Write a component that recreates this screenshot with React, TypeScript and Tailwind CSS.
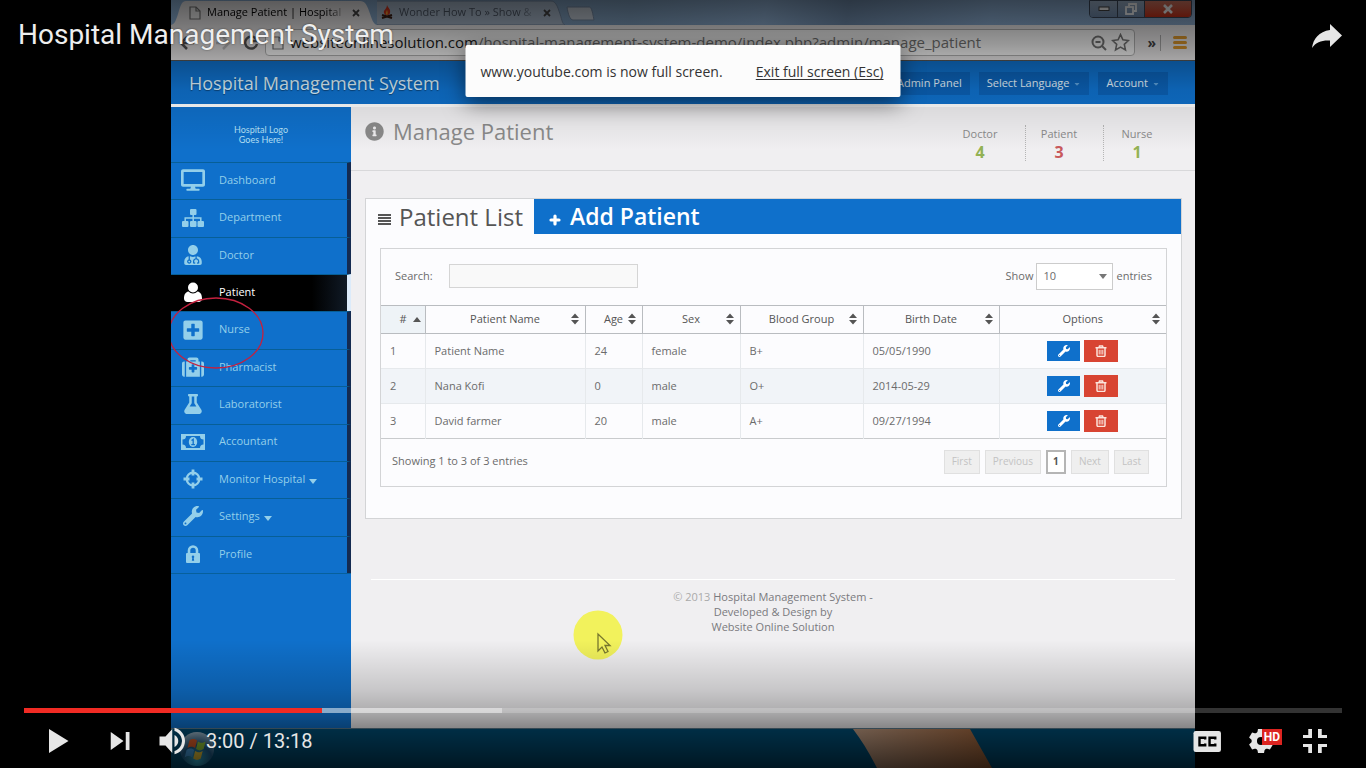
import type { ReactNode } from "react";
import {
  FaCaretDown,
  FaDesktop,
  FaFlask,
  FaInfoCircle,
  FaMedkit,
  FaPlusSquare,
  FaUserMd,
  FaWrench,
} from "react-icons/fa";

type IconProps = { className?: string };

function SitemapIcon({ className }: IconProps) {
  return (
    <svg viewBox="0 0 22 20" className={className} fill="currentColor">
      <rect x="8" y="1" width="6.500" height="6" rx="1" />
      <rect x="0" y="13" width="6.500" height="6" rx="1" />
      <rect x="8" y="13" width="6.500" height="6" rx="1" />
      <rect x="15.500" y="13" width="6.500" height="6" rx="1" />
      <path d="M3.200 13v-3h15.600v3M11.200 7v6" fill="none" stroke="currentColor" strokeWidth="1.500" />
    </svg>
  );
}

function UserIcon({ className }: IconProps) {
  return (
    <svg viewBox="0 0 20 22" className={className} fill="currentColor">
      <circle cx="10" cy="6.500" r="5" />
      <path d="M5.500 10.500c2.500 2.500 6.500 2.500 9 0 3.500.500 4.500 4 4.500 7 0 2-1.500 3.500-3.500 3.500h-11C2.500 21 1 19.500 1 17.500c0-3 1-6.500 4.500-7z" />
    </svg>
  );
}

function MoneyIcon({ className }: IconProps) {
  return (
    <svg viewBox="0 0 24 24" className={className}>
      <path
        fill="currentColor"
        fillRule="evenodd"
        d="M0 4h24v16H0zM5 6a3.500 3.500 0 0 1-3.500 3.500v5A3.500 3.500 0 0 1 5 18h14a3.500 3.500 0 0 1 3.500-3.500v-5A3.500 3.500 0 0 1 19 6z"
      />
      <ellipse cx="12" cy="12" rx="4.200" ry="5" fill="currentColor" />
      <path d="M10.500 10.500l1.700-1.200v5.200M10.300 14.700h3.600" fill="none" stroke="#0f70cb" strokeWidth="1.300" />
    </svg>
  );
}

function CrosshairsIcon({ className }: IconProps) {
  return (
    <svg viewBox="0 0 20 20" className={className} fill="none" stroke="currentColor">
      <circle cx="10" cy="10" r="6.300" strokeWidth="2.200" />
      <path d="M10 .500v6M10 13.500v6M.500 10h6M13.500 10h6" strokeWidth="2.800" />
    </svg>
  );
}

function LockIcon({ className }: IconProps) {
  return (
    <svg viewBox="0 0 18 20" className={className}>
      <path d="M5 10V6.500a4 4 0 0 1 8 0V10" fill="none" stroke="currentColor" strokeWidth="2.600" />
      <rect x="2" y="9" width="14" height="10" rx="1" fill="currentColor" />
      <path d="M9 11.500a1.300 1.300 0 0 1 .700 2.400l.500 2.800H7.800l.500-2.800a1.300 1.300 0 0 1 .7-2.400z" fill="#0f70cb" />
    </svg>
  );
}

function TrashIcon({ className }: IconProps) {
  return (
    <svg viewBox="0 0 12 12" className={className} fill="none" stroke="currentColor">
      <path d="M.5 2.800h11M4 2.500l.500-1.500h3L8 2.500" strokeWidth="1.500" />
      <path d="M2 3v7.300c0 .7.400 1.100 1 1.100h6c.6 0 1-.4 1-1.100V3" strokeWidth="1.500" />
      <path d="M4.200 4.800v4.700M6 4.800v4.700M7.800 4.800v4.700" />
    </svg>
  );
}

function SortIcon({ className }: IconProps) {
  return (
    <svg viewBox="0 0 8 12" className={className} fill="currentColor">
      <path d="M4 .5L8 5H0zM4 11.500L0 7h8z" />
    </svg>
  );
}

const navItems = [
  { label: "Dashboard", icon: FaDesktop, size: "size-6" },
  { label: "Department", icon: SitemapIcon, size: "h-5 w-[22px]" },
  { label: "Doctor", icon: FaUserMd, size: "size-5" },
  { label: "Patient", icon: UserIcon, size: "h-[22px] w-5", active: true },
  { label: "Nurse", icon: FaPlusSquare, size: "size-[22px]" },
  { label: "Pharmacist", icon: FaMedkit, size: "size-[22px]" },
  { label: "Laboratorist", icon: FaFlask, size: "size-5" },
  { label: "Accountant", icon: MoneyIcon, size: "size-6" },
  { label: "Monitor Hospital", icon: CrosshairsIcon, size: "size-5", menu: true },
  { label: "Settings", icon: FaWrench, size: "size-5", menu: true },
  { label: "Profile", icon: LockIcon, size: "h-5 w-[18px]" },
];

const stats = [
  { label: "Doctor", value: 4, color: "text-[#93b255]" },
  { label: "Patient", value: 3, color: "text-[#c8595c]" },
  { label: "Nurse", value: 1, color: "text-[#93b255]" },
];

const columns = [
  { label: "Patient Name", width: "w-[160px]" },
  { label: "Age", width: "w-[57px]" },
  { label: "Sex", width: "w-[98px]" },
  { label: "Blood Group", width: "w-[123px]" },
  { label: "Birth Date", width: "w-[136px]" },
  { label: "Options", width: "" },
];

const patients = [
  { id: 1, name: "Patient Name", age: 24, sex: "female", blood: "B+", birth: "05/05/1990" },
  { id: 2, name: "Nana Kofi", age: 0, sex: "male", blood: "O+", birth: "2014-05-29" },
  { id: 3, name: "David farmer", age: 20, sex: "male", blood: "A+", birth: "09/27/1994" },
];

function PageIcon({ className }: IconProps) {
  return (
    <svg viewBox="0 0 12 14" className={className} fill="#f4f4f4" stroke="#777" strokeWidth="1.2">
      <path d="M1 1h6l4 4v8H1z" />
      <path d="M7 1v4h4" fill="none" />
    </svg>
  );
}

function BrowserChrome() {
  return (
    <header className="shrink-0 font-['Open_Sans',sans-serif]">
      <div className="relative flex h-[25px] items-end bg-[linear-gradient(100deg,#8fb4da_0%,#7f9fbf_45%,#8fb0d4_58%,#728fb0_66%,#8db0d6_80%,#8aa9cc_100%)]">
        <div className="relative flex h-[25px] w-[206px] items-center">
          <svg className="absolute inset-0 size-full" viewBox="0 0 206 25" preserveAspectRatio="none">
            <path d="M0 25 C4 24 5 20 7 14 C10 4 11 1 15 1 H189 C194 1 196 5 198 11 C201 19 202 24 206 25z" fill="#efedee" />
          </svg>
          <PageIcon className="relative ml-[18px] h-[14px] w-3" />
          <span className="relative ml-1.5 w-[141px] text-[11px] whitespace-nowrap text-black mask-r-from-85%">
            Manage Patient | Hospital
          </span>
          <button aria-label="Close tab" className="relative ml-1 text-[#444]">
            <svg viewBox="0 0 8 8" className="size-2" stroke="currentColor" strokeWidth="1.8">
              <path d="M1 1l6 6M7 1L1 7" />
            </svg>
          </button>
        </div>
        <div className="relative flex h-[25px] w-[188px] items-center">
          <svg className="absolute inset-0 size-full" viewBox="0 0 188 25" preserveAspectRatio="none">
            <path d="M-6 1 H174 C178 1 180 5 182 11 C185 19 185 24 188 25 H0 C-4 18 -4 8 -6 1z" fill="#a9b9cc" stroke="#7489a3" />
          </svg>
          <svg viewBox="0 0 12 15" className="relative ml-1 h-[15px] w-3">
            <path d="M6 0c1 3 4 4 3 8-1 3-5 3-6 0-1-3 3-4 3-8z" fill="#d6371e" />
            <path d="M6 5c1 2 1 4 0 5-2-1-1-3 0-5z" fill="#f4a12c" />
            <path d="M1 10l10 3M11 10L1 13" stroke="#3a1c12" strokeWidth="2" />
          </svg>
          <span className="relative ml-1.5 w-[140px] text-[11px] whitespace-nowrap text-[#4c5665] mask-r-from-85%">
            Wonder How To » Show &amp;
          </span>
          <button aria-label="Close tab" className="relative ml-1 text-[#444]">
            <svg viewBox="0 0 8 8" className="size-2" stroke="currentColor" strokeWidth="1.8">
              <path d="M1 1l6 6M7 1L1 7" />
            </svg>
          </button>
        </div>
        <button aria-label="New tab" className="mb-1 h-[15px]">
          <svg viewBox="0 0 30 15" className="h-[15px] w-[30px]">
            <path d="M2 1h22c2 0 3 2 5 13H8C5 14 3 8 2 1z" fill="#c3ccd6" stroke="#7489a3" />
          </svg>
        </button>
        <div className="mr-[3px] mb-[7px] ml-auto flex h-[18px] overflow-hidden rounded-b border border-[#3d4a5c] text-white">
          <button aria-label="Minimize" className="flex w-7 items-center justify-center border-r border-[#3d4a5c] bg-[linear-gradient(#a8bdd6,#6d88aa)]">
            <svg viewBox="0 0 12 6" className="h-1.5 w-3"><rect x="1" y="1" width="10" height="3.5" fill="#fff" stroke="#444" /></svg>
          </button>
          <button aria-label="Restore" className="flex w-[27px] items-center justify-center border-r border-[#3d4a5c] bg-[linear-gradient(#a8bdd6,#6d88aa)]">
            <svg viewBox="0 0 12 12" className="size-3" fill="none" stroke="#fff" strokeWidth="1.8">
              <path d="M4 3V1h7v7H9" /><rect x="1" y="4" width="7" height="7" />
            </svg>
          </button>
          <button aria-label="Close" className="flex w-[46px] items-center justify-center bg-[linear-gradient(#e0806a,#c83018)]">
            <svg viewBox="0 0 12 10" className="h-2.5 w-3" stroke="#fff" strokeWidth="2.6"><path d="M2 1l8 8M10 1L2 9" /></svg>
          </button>
        </div>
      </div>

      <div className="flex h-9 items-center border-b border-[#555] bg-[#efedee] px-2">
        <div className="flex w-[82px] items-center gap-5 text-[#555]">
          <svg viewBox="0 0 16 14" className="h-3.5 w-4" fill="none" stroke="currentColor" strokeWidth="2.5"><path d="M8 1L2 7l6 6M2 7h13" /></svg>
          <svg viewBox="0 0 16 14" className="h-3.5 w-4 opacity-30" fill="none" stroke="currentColor" strokeWidth="2.5"><path d="M8 1l6 6-6 6M14 7H1" /></svg>
          <svg viewBox="0 0 16 16" className="-ml-2 size-4" fill="none" stroke="currentColor" strokeWidth="2.5"><path d="M13 4a6 6 0 1 0 1 5M14 1v5H9" /></svg>
        </div>
        <div className="ml-1 flex h-[27px] min-w-0 flex-1 items-center rounded-sm border border-[#b5b5b5] bg-white pr-1 pl-1.5">
          <PageIcon className="h-[14px] w-3 shrink-0" />
          <div className="ml-1.5 flex-1 text-[15px] whitespace-nowrap text-[#777]">
            <span className="text-[#222]">websiteonlinesolution.com</span>/hospital-management-system-demo/index.php?admin/manage_patient
          </div>
          <svg viewBox="0 0 16 16" className="size-4 shrink-0" fill="none" stroke="#777" strokeWidth="2">
            <circle cx="7" cy="7" r="5.5" /><path d="M11 11l4 4M4.500 7h5" />
          </svg>
          <svg viewBox="0 0 18 18" className="ml-1 size-[19px] shrink-0" fill="none" stroke="#777" strokeWidth="1.5">
            <path d="M9 1.500l2.300 5 5.200.600-3.900 3.600 1.100 5.300L9 13.300 4.300 16l1.100-5.300L1.500 7.100l5.200-.600z" />
          </svg>
        </div>
        <span className="ml-3 text-sm leading-none font-bold text-[#444]">»</span>
        <span className="ml-1 h-4 w-px bg-[#aaa]" />
        <button aria-label="Menu" className="ml-3 flex w-[14px] flex-col gap-0.5">
          <span className="h-[3px] rounded-sm bg-[#e09a2e]" />
          <span className="h-[3px] rounded-sm bg-[#e09a2e]" />
          <span className="h-[3px] rounded-sm bg-[#e09a2e]" />
        </button>
      </div>
    </header>
  );
}

function HeaderButton({ children, menu }: { children: ReactNode; menu?: boolean }) {
  return (
    <button className="flex h-[23px] items-center gap-1 bg-[#0b60b4] px-2 text-[11px] whitespace-nowrap text-[#e3f2fb]">
      {children}
      {menu && <FaCaretDown className="size-2 text-[#5c9fd8]" />}
    </button>
  );
}

function Sidebar() {
  return (
    <aside className="w-[180px] shrink-0 bg-[#0f70cb]">
      <div className="flex h-[55px] items-center justify-center font-[Lato,sans-serif]">
        <p className="text-center text-[9px] leading-[10px] text-[#b5e0f7]">
          Hospital Logo
          <br />
          Goes Here!
        </p>
      </div>
      <nav>
        <ul className="flex h-[412px] flex-col border-b border-[#07609c]">
          {navItems.map(({ label, icon: Icon, size, active, menu }) => (
            <li key={label} className="flex-1">
              <a
                href="#"
                className={
                  active
                    ? "flex h-full items-center border-t border-r-4 border-t-[#075f97] border-r-[#dcebfa] bg-[linear-gradient(90deg,#000_80%,#101a26)] pb-0.5 text-white"
                    : "flex h-full items-center border-t border-r-4 border-t-[#075f97] border-r-[#142a50] pb-0.5 text-[#93cfea]"
                }
              >
                <span className="flex w-[44px] justify-center">
                  <Icon className={size} />
                </span>
                <span className="ml-1 text-[11px]">{label}</span>
                {menu && (
                  <svg viewBox="0 0 8 5" className="mt-1 ml-1 h-[5px] w-2" fill="currentColor">
                    <path d="M0 0h8L4 5z" />
                  </svg>
                )}
              </a>
            </li>
          ))}
        </ul>
      </nav>
    </aside>
  );
}

function PatientTable() {
  return (
    <table className="w-full table-fixed border-collapse text-[11px] text-[#6b6b6b]">
      <thead>
        <tr className="h-[28px] border-y border-[#b9bcc0] text-[#555]">
          <th className="w-[44px] border-r border-[#b9bcc0] bg-[#eef3f7] p-0 font-normal">
            <span className="flex items-center justify-end gap-1.5 pr-1">
              #
              <svg viewBox="0 0 8 5" className="h-[5px] w-2" fill="currentColor"><path d="M4 0l4 5H0z" /></svg>
            </span>
          </th>
          {columns.map((c) => (
            <th key={c.label} className={`${c.width} border-r border-[#b9bcc0] p-0 font-normal last:border-r-0`}>
              <span className="flex items-center pr-1.5 pl-[14px]">
                <span className="flex-1 text-center whitespace-nowrap">{c.label}</span>
                <SortIcon className="mb-0.5 h-3 w-2" />
              </span>
            </th>
          ))}
        </tr>
      </thead>
      <tbody>
        {patients.map((p) => (
          <tr key={p.id} className="h-[35px] border-b border-[#e6e9ec] last:border-[#c9cbcd] even:bg-[#f1f4f8]">
            {[p.id, p.name, p.age, p.sex, p.blood, p.birth].map((value, i) => (
              <td key={i} className="border-r border-[#e6e9ec] py-0 pl-[9px]">
                {value}
              </td>
            ))}
            <td className="p-0">
              <div className="flex items-center justify-center gap-1">
                <button aria-label={`Edit ${p.name}`} className="flex h-5 w-[33px] items-center justify-center bg-[#0f70cb] text-white">
                  <FaWrench className="size-3" />
                </button>
                <button aria-label={`Delete ${p.name}`} className="flex h-[22px] w-[34px] items-center justify-center bg-[#d84432] text-[#fbe3dc]">
                  <TrashIcon className="size-3" />
                </button>
              </div>
            </td>
          </tr>
        ))}
      </tbody>
    </table>
  );
}

function PagerButton({ children }: { children: ReactNode }) {
  return (
    <button disabled className="h-6 border border-[#e0e0e0] bg-[#efefef] px-[7px] text-[#c3c3c3]">
      {children}
    </button>
  );
}

function PatientPanel() {
  return (
    <section className="mt-[27px] mr-[13px] ml-[14px] border border-[#d3d4d6] bg-[#fcfcfe] pb-[31px]">
      <div role="tablist" className="flex h-[35px] bg-[#0f70cb]">
        <button role="tab" aria-selected="true" className="flex items-center gap-2 bg-[#fcfcfe] pr-[11px] pl-3 text-[24px] text-[#555]">
          <svg viewBox="0 0 13 11" className="mt-1.5 h-[11px] w-[13px]" fill="currentColor">
            <path d="M0 0h13v2H0zM0 3h13v2H0zM0 6h13v2H0zM0 9h13v2H0z" />
          </svg>
          Patient List
        </button>
        <button role="tab" aria-selected="false" className="flex items-center gap-[9px] px-[15px] text-[23px] font-semibold text-white">
          <svg viewBox="0 0 12 12" className="mt-1.5 size-3" stroke="currentColor" strokeWidth="3.200" strokeLinecap="round">
            <path d="M6 2v8M2 6h8" />
          </svg>
          Add Patient
        </button>
      </div>
      <div className="mx-[14px] mt-[14px] border border-[#d3d4d6] text-[11px] text-[#6b6b6b]">
        <div className="flex h-14 items-center justify-between px-[14px] pb-0.5">
          <label className="flex items-center gap-4">
            Search:
            <input type="text" className="h-6 w-[189px] border border-[#d5d5d5] bg-[#f9f9f9] px-2" />
          </label>
          <label className="flex items-center gap-[3px]">
            Show
            <span className="relative">
              <select className="h-[27px] w-[77px] appearance-none border border-[#ccc] bg-white px-1.5">
                <option>10</option>
                <option>25</option>
              </select>
              <svg viewBox="0 0 8 5" className="pointer-events-none absolute top-[11px] right-1.5 h-[5px] w-2" fill="#777">
                <path d="M0 0h8L4 5z" />
              </svg>
            </span>
            entries
          </label>
        </div>
        <PatientTable />
        <div className="flex h-[47px] items-center justify-between pr-[17px] pb-0.5 pl-[11px]">
          <p>Showing 1 to 3 of 3 entries</p>
          <div className="flex gap-[5px] text-[10px]">
            <PagerButton>First</PagerButton>
            <PagerButton>Previous</PagerButton>
            <button className="h-6 w-5 border-2 border-[#b5b5b5] bg-white font-bold text-[#555]">1</button>
            <PagerButton>Next</PagerButton>
            <PagerButton>Last</PagerButton>
          </div>
        </div>
      </div>
    </section>
  );
}

function HospitalApp() {
  return (
    <div className="flex min-h-0 flex-1 flex-col bg-[#f0eff1] font-['Open_Sans',sans-serif]">
      <header className="flex h-[43px] shrink-0 items-center bg-[#0f70cb] pt-0.5 pr-[27px] pl-[18px]">
        <h1 className="text-[18px] text-[#d8eefa] text-shadow-[0_1px_1px_#0006]">Hospital Management System</h1>
        <div className="ml-auto flex gap-[9px]">
          <HeaderButton>Admin Panel</HeaderButton>
          <HeaderButton menu>Select Language</HeaderButton>
          <HeaderButton menu>Account</HeaderButton>
        </div>
      </header>
      <div className="h-[3px] shrink-0 bg-white" />
      <div className="flex min-h-0 flex-1">
        <Sidebar />
        <main className="min-w-0 flex-1">
          <div className="flex h-[64px] justify-between border-b border-[#d8d8da] pr-[25px] pl-[14px]">
            <h2 className="flex h-[49px] items-center gap-[9px] text-[22px] text-[#8b8b8b]">
              <FaInfoCircle className="size-[19px]" />
              Manage Patient
            </h2>
            <dl className="mt-[18px] flex h-9">
              {stats.map((s) => (
                <div
                  key={s.label}
                  className="w-[78px] border-l border-dotted border-[#b5b5b5] pr-[11px] text-center first:w-[90px] first:border-l-0 first:pr-0 last:w-[67px] last:pr-0"
                >
                  <dt className="text-[11px] leading-[18px] text-[#8b8b8b]">{s.label}</dt>
                  <dd className={`text-base leading-[18px] font-bold ${s.color}`}>{s.value}</dd>
                </div>
              ))}
            </dl>
          </div>
          <PatientPanel />
          <footer className="mx-5 mt-[60px] border-t border-white pt-[9px] text-center text-[11px] leading-[15px] text-[#7a7a7e]">
            <p><span className="text-[#aaa]">© 2013</span> Hospital Management System -</p>
            <p>Developed &amp; Design by</p>
            <p>Website Online Solution</p>
          </footer>
        </main>
      </div>
    </div>
  );
}

function Taskbar() {
  return (
    <div className="relative flex h-10 shrink-0 items-center border-t border-[#5d7f92] bg-[#00527c]">
      <svg className="absolute top-0 left-[66.500%] h-full w-[140px]" viewBox="0 0 140 40" preserveAspectRatio="none">
        <defs>
          <linearGradient id="skin" x1="0" x2="1">
            <stop offset="0" stopColor="#c9a58b" />
            <stop offset="1" stopColor="#a8683c" />
          </linearGradient>
        </defs>
        <path d="M1 0H118L140 40H25C18 26 10 12 1 0z" fill="url(#skin)" />
      </svg>
      <svg className="ml-2 size-9" viewBox="0 0 38 38">
        <defs>
          <radialGradient id="orb" cx=".5" cy=".85" r=".9">
            <stop offset="0" stopColor="#37c5e8" />
            <stop offset=".5" stopColor="#20608e" />
            <stop offset="1" stopColor="#b9cfdd" />
          </radialGradient>
        </defs>
        <circle cx="19" cy="19" r="18" fill="url(#orb)" />
        <path d="M11 10c3-2 5-2 8 0l-2 8c-3-2-5-2-8 0z" fill="#f0642c" />
        <path d="M20 11c3 2 5 2 8 0l-2 8c-3 2-5 2-8 0z" fill="#9ad03c" />
        <path d="M8 20c3-2 5-2 8 0l-2 8c-3-2-5-2-8 0z" fill="#4aa6ea" />
        <path d="M17 21c3 2 5 2 8 0l-2 8c-3 2-5 2-8 0z" fill="#fbd23c" />
      </svg>
    </div>
  );
}

function VideoFrame() {
  return (
    <div className="relative mx-auto flex aspect-[4/3] h-screen flex-col overflow-hidden">
      <BrowserChrome />
      <HospitalApp />
      <Taskbar />
      <svg className="absolute top-[296px] -left-0.5 h-[75px] w-[96px]" viewBox="0 0 96 75" fill="none">
        <ellipse cx="47" cy="37" rx="47" ry="35" stroke="#c4213f" strokeWidth="1.300" />
      </svg>
      <svg className="absolute top-[610px] left-[402px] size-[50px]" viewBox="0 0 50 50">
        <circle cx="25" cy="25" r="24.500" fill="#f2f25c" />
        <path d="M25 24v17l4-4 3 6 3-1.500-3-6h5z" fill="#f2f25c" stroke="#77772e" strokeWidth="1.300" />
      </svg>
      <div className="absolute inset-x-0 top-0 h-[150px] bg-[linear-gradient(#0000009e_0,#00000066_45px,#0000001f_90px,transparent)]" />
      <div className="absolute inset-x-0 bottom-0 h-[128px] bg-[linear-gradient(transparent,#0000002b_50px,#00000045_70px,#0000006b_86px,#000000b8)]" />
    </div>
  );
}

function PlayerButton({ label, children }: { label: string; children: ReactNode }) {
  return (
    <button aria-label={label} className="size-[54px] shrink-0">
      <svg viewBox="0 0 36 36" className="size-full" fill="#e6e6e6">
        {children}
      </svg>
    </button>
  );
}

const gearTeeth = [0, 60, 120, 180, 240, 300];

function PlayerControls() {
  return (
    <div className="absolute inset-x-0 bottom-0 px-6 font-[Roboto,sans-serif] text-[#e6e6e6]">
      <div className="relative h-[5px] bg-white/20">
        <div className="absolute inset-y-0 left-0 w-[36.300%] bg-white/40" />
        <div className="absolute inset-y-0 left-0 w-[22.600%] bg-[#f12b24]" />
        <input type="range" aria-label="Seek" min={0} max={798} defaultValue={180} className="absolute inset-0 size-full opacity-0" />
      </div>
      <div className="mt-px flex h-[54px] items-center pl-[7px]">
        <PlayerButton label="Play"><path d="M12 10v16l13-8z" /></PlayerButton>
        <div className="ml-[7px] flex items-center">
          <PlayerButton label="Next"><path d="M12.500 12v12l8.500-6zM22.500 12v12H25V12z" /></PlayerButton>
          <PlayerButton label="Mute">
            <path d="M9 15v6h4l4.500 5V10L13 15z" />
            <path d="M19 14v8c1.500-.700 2.500-2.200 2.500-4s-1-3.300-2.500-4z" />
            <path d="M19 9.200v2.100c2.800.900 5 3.500 5 6.700s-2.200 5.800-5 6.700v2.100c4-.900 7-4.500 7-8.800s-3-7.900-7-8.800z" />
          </PlayerButton>
        </div>
        <span className="ml-1.5 text-[20px]">3:00 / 13:18</span>
        <div className="ml-auto flex items-center">
          <PlayerButton label="Subtitles">
            <rect x="9" y="11.300" width="18.300" height="14" rx="1.500" />
            <path d="M16.800 17v-1.200h-3.800v5h3.800v-1.200M23.500 17v-1.200h-3.800v5h3.800v-1.200" fill="none" stroke="#000" strokeWidth="1.600" />
          </PlayerButton>
          <div className="relative flex">
            <PlayerButton label="Settings">
              <circle cx="18" cy="18" r="4.500" fill="none" stroke="#e6e6e6" strokeWidth="3.600" />
              {gearTeeth.map((angle) => (
                <path key={angle} d="M16 10h4l.700 3.500h-5.400z" transform={`rotate(${angle} 18 18)`} />
              ))}
            </PlayerButton>
            <span className="absolute top-[15px] left-7 flex h-4 w-5 items-center justify-center bg-[#dc2420] text-xs font-bold text-white">
              HD
            </span>
          </div>
          <PlayerButton label="Exit full screen">
            <path d="M14 14h-4v2h6v-6h-2.500v4zM22.500 14v-4H20v6h6v-2zM20 26h2.500v-4H26v-2h-6zM10 22h3.500v4H16v-6h-6z" />
          </PlayerButton>
        </div>
      </div>
    </div>
  );
}

export default function App() {
  return (
    <div className="relative min-h-screen overflow-hidden bg-black">
      <VideoFrame />
      <div className="absolute inset-x-0 top-0 flex justify-between pt-[18px] pr-6 pl-[18px]">
        <h1 className="font-[Roboto,sans-serif] text-[28px] leading-[34px] text-[#eee] text-shadow-[0_0_2px_#0008]">
          Hospital Management System
        </h1>
        <button aria-label="Share" className="mt-1.5 h-6">
          <svg viewBox="0 0 30 24" className="h-6 w-[30px]" fill="#e6e6e6">
            <path d="M18 0l12 11.500L18 23v-6.500C10 16 4 18 0 24 1 15 7 7.500 18 6z" />
          </svg>
        </button>
      </div>
      <PlayerControls />
      <div
        role="dialog"
        aria-label="Full screen notice"
        className="absolute top-[45px] left-1/2 flex h-[52px] w-[435px] -translate-x-1/2 items-center justify-between rounded-xs bg-[#fcfcfc] pt-0.5 pr-[17px] pl-[15px] font-['Open_Sans',sans-serif] text-sm whitespace-nowrap text-[#333] shadow-[0_6px_22px_#00000088]"
      >
        <span>www.youtube.com is now full screen.</span>
        <button className="underline underline-offset-2">Exit full screen (Esc)</button>
      </div>
    </div>
  );
}
